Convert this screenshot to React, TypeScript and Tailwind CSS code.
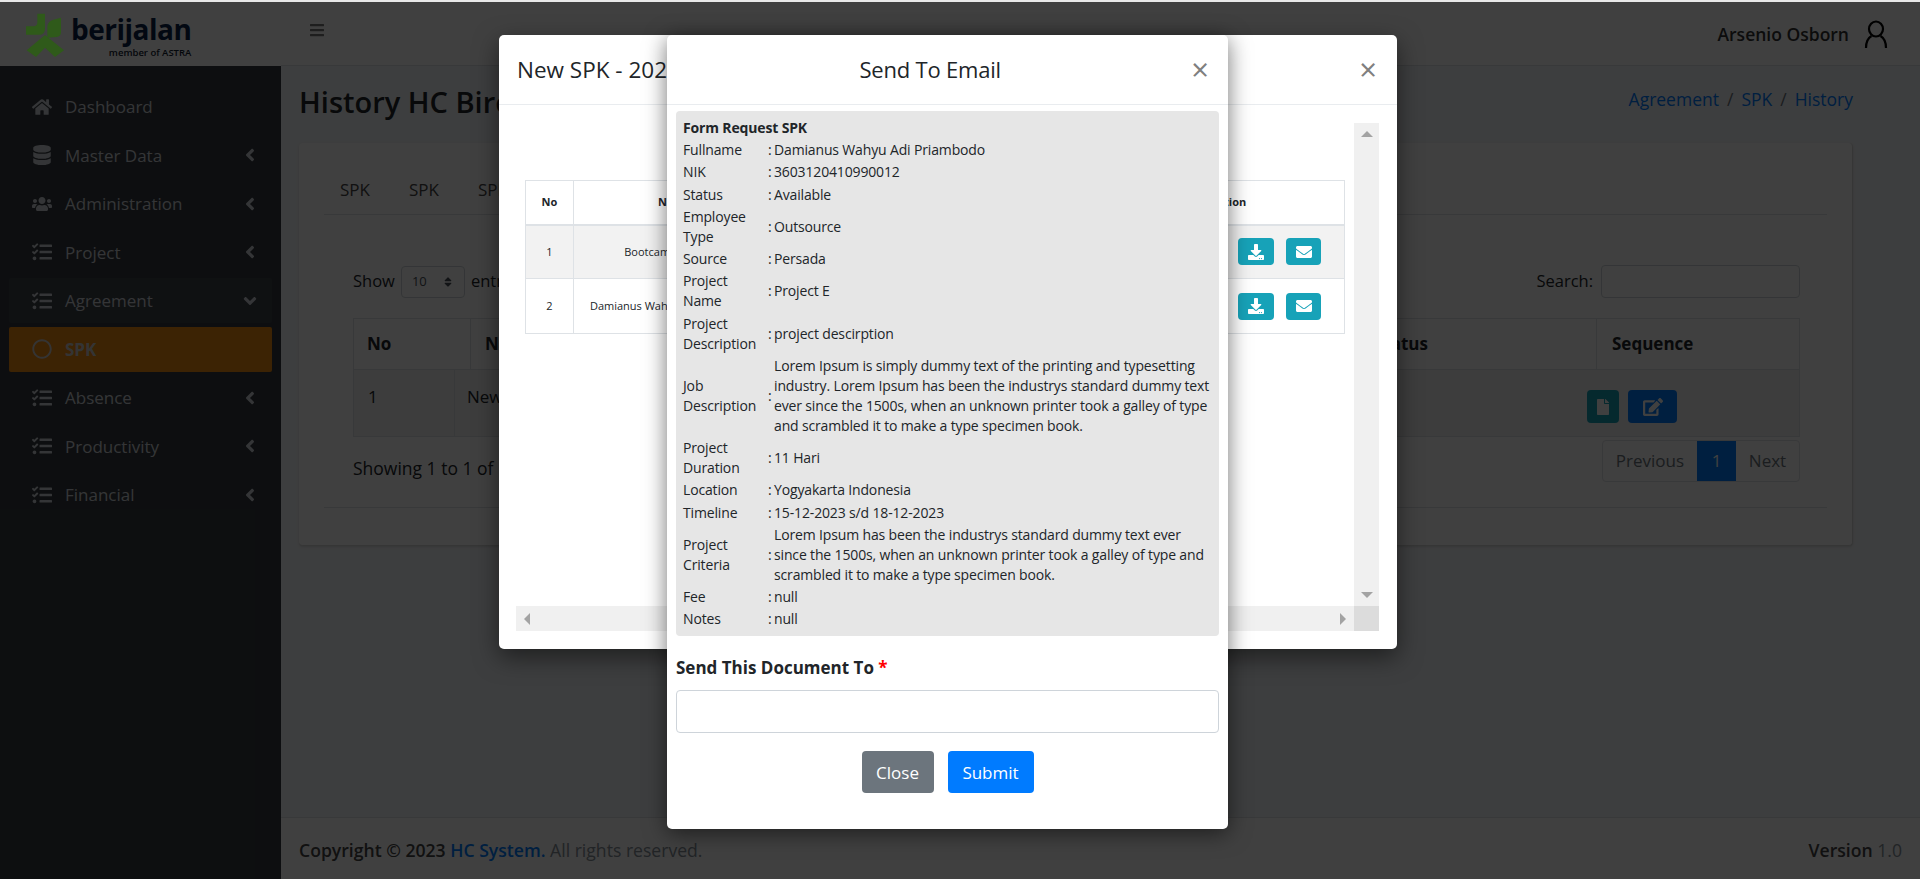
import React from 'react';
import {
  FaAngleDown,
  FaAngleLeft,
  FaBars,
  FaDatabase,
  FaDownload,
  FaEdit,
  FaEnvelope,
  FaFile,
  FaHome,
  FaRegCircle,
  FaSort,
  FaTasks,
  FaUsers,
} from 'react-icons/fa';

const menu = [
  { name: 'Dashboard', icon: FaHome },
  { name: 'Master Data', icon: FaDatabase, arrow: true },
  { name: 'Administration', icon: FaUsers, arrow: true },
  { name: 'Project', icon: FaTasks, arrow: true },
  { name: 'Agreement', icon: FaTasks, open: true },
  { name: 'SPK', icon: FaRegCircle, active: true },
  { name: 'Absence', icon: FaTasks, arrow: true },
  { name: 'Productivity', icon: FaTasks, arrow: true },
  { name: 'Financial', icon: FaTasks, arrow: true },
];

const details: { label: string; value: string }[] = [
  { label: 'Fullname', value: 'Damianus Wahyu Adi Priambodo' },
  { label: 'NIK', value: '3603120410990012' },
  { label: 'Status', value: 'Available' },
  { label: 'Employee Type', value: 'Outsource' },
  { label: 'Source', value: 'Persada' },
  { label: 'Project Name', value: 'Project E' },
  { label: 'Project Description', value: 'project descirption' },
  {
    label: 'Job Description',
    value:
      'Lorem Ipsum is simply dummy text of the printing and typesetting industry. Lorem Ipsum has been the industrys standard dummy text ever since the 1500s, when an unknown printer took a galley of type and scrambled it to make a type specimen book.',
  },
  { label: 'Project Duration', value: '11 Hari' },
  { label: 'Location', value: 'Yogyakarta Indonesia' },
  { label: 'Timeline', value: '15-12-2023 s/d 18-12-2023' },
  {
    label: 'Project Criteria',
    value:
      'Lorem Ipsum has been the industrys standard dummy text ever since the 1500s, when an unknown printer took a galley of type and scrambled it to make a type specimen book.',
  },
  { label: 'Fee', value: 'null' },
  { label: 'Notes', value: 'null' },
];

function Logo() {
  return (
    <div className="flex h-[64px] w-full items-start bg-white pl-[26px]">
      {/* the mark keeps its colour above the backdrop, as in the picture */}
      <svg width="38" height="44" viewBox="78 38 114 132" className="relative z-10 mt-[11px] shrink-0">
        <g fill="#2f5a1a">
          <path d="M112 40L135 40L135 85Q135 103 117 103L78 103L78 78L100 78Q112 78 112 66Z" />
          <path d="M183 52L183 95Q183 108 170 110L142 112L142 78Q144 62 160 58Z" />
          <path d="M135 104L192 150L165 170L135 142L108 170L80 150Z" />
        </g>
      </svg>
      <div className="ml-[7px] flex flex-col items-end pt-[12px]">
        <span className="text-[28px] leading-[30px] font-bold tracking-[-0.5px] text-[#0a2348]">berijalan</span>
        <span className="mt-[3px] text-[9.5px] leading-[12px] font-semibold text-[#10202f]">member of ASTRA</span>
      </div>
    </div>
  );
}

function Sidebar() {
  return (
    <aside className="flex w-[281px] shrink-0 flex-col bg-[#343a40]">
      <Logo />
      <nav className="flex flex-col pt-[16.5px]">
        {menu.map((item) => (
          <div
            key={item.name}
            className={`mx-[9px] my-[1.75px] flex h-[45px] items-center rounded-[2px] pr-[12px] pl-[20px] text-[17px] ${
              item.active
                ? 'bg-[#f08a10] font-bold text-[#d0d0d0]'
                : item.open
                  ? 'bg-white/5 text-[#d0d4da]'
                  : 'text-[#d0d4da]'
            }`}
          >
            <span className="mr-[10px] flex w-[26px] shrink-0 items-center justify-center">
              <item.icon className="text-[20px]" />
            </span>
            <span className="flex-1">{item.name}</span>
            {item.arrow && <FaAngleLeft className="text-[20px]" />}
            {item.open && <FaAngleDown className="text-[20px]" />}
          </div>
        ))}
      </nav>
    </aside>
  );
}

function Page() {
  return (
    <div className="flex min-w-0 flex-1 flex-col bg-[#f4f6f9]">
      <header className="flex h-[64px] shrink-0 items-center justify-between border-b border-[#dee2e6] bg-white pr-[32px] pl-[28px]">
        <FaBars className="mb-[7px] text-[16px] text-[#777]" />
        <div className="flex items-center gap-[15px] pt-[2px]">
          <span className="text-[17.5px] font-semibold text-[#333]">Arsenio Osborn</span>
          <svg width="24" height="30" viewBox="0 0 24 30" fill="none" stroke="#000" strokeWidth="2.2" className="mt-[1px]">
            <ellipse cx="12" cy="9" rx="7" ry="7.5" />
            <path d="M2 28c0-6 2-10 5.5-12M22 28c0-6-2-10-5.5-12" />
          </svg>
        </div>
      </header>
      <div className="flex items-start justify-between pt-[17px] pr-[67px] pl-[18px]">
        <h1 className="text-[29px] leading-[38px] font-semibold text-[#212529]">History HC Birojasa</h1>
        <div className="flex gap-[8px] text-[17.5px] leading-[33px] text-[#6c757d]">
          <span className="text-[#007bff]">Agreement</span>/<span className="text-[#007bff]">SPK</span>/
          <span className="text-[#007bff]">History</span>
        </div>
      </div>
      <section className="mt-[22px] mr-[67px] ml-[18px] h-[403px] rounded-[4px] border-r border-b border-[#d8d8d8] bg-white px-[25px] shadow-sm">
        <div className="flex h-[72px] items-end gap-[39px] border-b border-[#dee2e6] pb-[12px] pl-[16px] text-[17px] text-[#444]">
          <span>SPK</span>
          <span>SPK</span>
          <span>SPK</span>
        </div>
        <div className="mr-[27px] ml-[29px]">
          <div className="mt-[50px] flex items-center justify-between text-[16.5px] text-[#212529]">
            <div className="flex items-center gap-[6px]">
              Show
              <span className="flex h-[32px] w-[64px] items-center justify-between rounded-[4px] border border-[#ced4da] px-[10px] text-[13px] text-[#495057]">
                10
                <FaSort className="text-[12px]" />
              </span>
              entries
            </div>
            <div className="flex items-center gap-[8px]">
              Search:
              <span className="h-[33px] w-[199px] rounded-[4px] border border-[#ced4da] bg-white" />
            </div>
          </div>
          <div className="mt-[20px] flex h-[52px] items-center border border-[#dee2e6] text-[17px] font-bold text-[#212529]">
            <span className="flex h-full w-[117px] items-center border-r border-[#dee2e6] pl-[13px]">No</span>
            <span className="flex-1 pl-[14px]">Name</span>
            <span className="mr-[168px]">Status</span>
            <span className="flex h-full w-[203px] items-center border-l border-[#dee2e6] pl-[15px]">Sequence</span>
          </div>
          <div className="flex h-[67px] items-start border-x border-b border-[#dee2e6] bg-[#f2f2f2] text-[17px] text-[#212529]">
            <span className="flex h-full w-[101px] items-center border-r border-[#dee2e6] pb-[12px] pl-[14px]">1</span>
            <span className="flex h-full flex-1 items-center pb-[12px] pl-[12px]">New SPK</span>
            <div className="mt-[20px] mr-[122px] flex gap-[9px] text-[16px] text-white">
              <span className="flex h-[33px] w-[32px] items-center justify-center rounded-[4px] bg-[#17a2b8]">
                <FaFile />
              </span>
              <span className="flex h-[33px] w-[49px] items-center justify-center rounded-[4px] bg-[#007bff]">
                <FaEdit className="text-[20px]" />
              </span>
            </div>
          </div>
          <div className="mt-[3px] flex items-start justify-between text-[17px]">
            <span className="pt-[15px] text-[17.5px] text-[#212529]">Showing 1 to 1 of 1 entries</span>
            <div className="flex h-[42px] w-[198px] items-center rounded-[4px] border border-[#dee2e6] text-[#6c757d]">
              <span className="w-[94px] text-center">Previous</span>
              <span className="flex h-full w-[39px] items-center justify-center bg-[#007bff] text-white">1</span>
              <span className="flex-1 text-center">Next</span>
            </div>
          </div>
        </div>
        <div className="mt-[25px] border-t border-[#dee2e6]" />
      </section>
      <div className="flex-1" />
      <footer className="flex h-[62px] items-center justify-between border-t border-[#dee2e6] bg-white px-[18px] pt-[3px] text-[17.6px] text-[#869099]">
        <span>
          <b className="font-semibold text-[#444]">Copyright © 2023 </b>
          <b className="font-semibold text-[#007bff]">HC System.</b> All rights reserved.
        </span>
        <span>
          <b className="font-semibold text-[#444]">Version</b> 1.0
        </span>
      </footer>
    </div>
  );
}

function CloseX() {
  return <span className="text-[31px] leading-none font-normal text-[#7f7f7f]">×</span>;
}

function Triangle({ dir }: { dir: 'up' | 'down' | 'left' | 'right' }) {
  const points = {
    up: '0,8 6,2 12,8',
    down: '0,4 6,10 12,4',
    left: '8,0 2,6 8,12',
    right: '4,0 10,6 4,12',
  }[dir];
  return (
    <svg width="12" height="12" viewBox="0 0 12 12">
      <polygon points={points} fill="#a3a3a3" />
    </svg>
  );
}

function ActionButtons() {
  return (
    <div className="flex justify-end gap-[12px] pr-[23px] text-[16px] text-white">
      <span className="flex h-[27px] w-[36px] items-center justify-center rounded-[4px] bg-[#17a2b8]">
        <FaDownload />
      </span>
      <span className="flex h-[27px] w-[35px] items-center justify-center rounded-[4px] bg-[#17a2b8]">
        <FaEnvelope />
      </span>
    </div>
  );
}

function SpkModal() {
  const cell = 'border border-[#dee2e6] text-center align-middle';
  return (
    <div className="absolute inset-0 flex items-start justify-center pt-[33px] pr-[24px]">
      <div className="flex h-[614px] w-[898px] flex-col rounded-[5px] bg-white shadow-[0_8px_24px_rgba(0,0,0,0.5)]">
        <div className="flex h-[70px] shrink-0 items-center justify-between border-b border-[#e9ecef] pr-[20px] pl-[18px]">
          <span className="text-[22.5px] text-[#212529]">New SPK - 2023</span>
          <CloseX />
        </div>
        <div className="grid min-h-0 flex-1 grid-cols-[1fr_25px] grid-rows-[1fr_25px] pt-[18px] pr-[18px] pb-[18px] pl-[17px]">
          <div className="min-h-0 overflow-hidden pt-[57px] pl-[9px]">
            <table className="w-[820px] table-fixed border-collapse text-[11px] text-[#212529]">
              <colgroup>
                <col className="w-[48px]" />
                <col className="w-[202px]" />
                <col />
                <col className="w-[232px]" />
              </colgroup>
              <thead>
                <tr className="h-[44px] border-b-2 border-[#dee2e6] font-bold">
                  <th className={cell}>No</th>
                  <th className={cell}>Name</th>
                  <th className={cell} />
                  <th className={cell}>Action</th>
                </tr>
              </thead>
              <tbody>
                <tr className="h-[54px] bg-[#f2f2f2]">
                  <td className={cell}>1</td>
                  <td className={cell}>Bootcamp Berijalan</td>
                  <td className={cell} />
                  <td className={cell}>
                    <ActionButtons />
                  </td>
                </tr>
                <tr className="h-[55px]">
                  <td className={cell}>2</td>
                  <td className={cell}>Damianus Wahyu Adi Priambodo</td>
                  <td className={cell} />
                  <td className={cell}>
                    <ActionButtons />
                  </td>
                </tr>
              </tbody>
            </table>
          </div>
          <div className="flex flex-col items-center justify-between bg-[#f0f0f0] py-[6px]">
            <Triangle dir="up" />
            <Triangle dir="down" />
          </div>
          <div className="flex items-center justify-between bg-[#f0f0f0] px-[6px]">
            <Triangle dir="left" />
            <Triangle dir="right" />
          </div>
          <div className="bg-[#dcdcdc]" />
        </div>
      </div>
    </div>
  );
}

function EmailModal() {
  return (
    <div className="absolute inset-0 flex items-start justify-center pt-[33px] pr-[25px]">
      <div className="flex h-[794px] w-[561px] flex-col rounded-[5px] bg-white shadow-[0_4px_22px_rgba(0,0,0,0.55)]">
        <div className="flex h-[70px] shrink-0 items-center border-b border-[#e9ecef] pr-[19px] pl-[18px]">
          <span className="flex-1 pr-[16px] text-center text-[22px] tracking-[-0.2px] text-[#212529]">Send To Email</span>
          <CloseX />
        </div>
        <div className="px-[9px] pt-[6px]">
          <div className="rounded-[4px] bg-[#e6e6e6] pt-[7px] pr-[6px] pb-[7px] pl-[7px] text-[14px] leading-[20px] tracking-[-0.15px] text-[#212529]">
            <div className="mb-[2px] font-bold">Form Request SPK</div>
            <div className="grid grid-cols-[85px_6px_1fr] items-center gap-y-[2.25px]">
              {details.map((row) => (
                <React.Fragment key={row.label}>
                  <span>{row.label}</span>
                  <span>:</span>
                  <span>{row.value}</span>
                </React.Fragment>
              ))}
            </div>
          </div>
          <label className="mt-[20px] block text-[17px] leading-[24px] font-bold text-[#212529]">
            Send This Document To <span className="text-[#ff0000]">*</span>
          </label>
          <div className="mt-[10px] h-[43px] rounded-[4px] border border-[#ced4da] bg-white" />
          <div className="mt-[18px] flex justify-center gap-[14px] text-[17px] text-white">
            <span className="flex h-[42px] w-[72px] items-center justify-center rounded-[4px] bg-[#6c757d]">Close</span>
            <span className="flex h-[42px] w-[86px] items-center justify-center rounded-[4px] bg-[#007bff]">Submit</span>
          </div>
        </div>
      </div>
    </div>
  );
}

export default function App() {
  return (
    <div className="flex h-[879px] w-full flex-col overflow-hidden bg-[#e8e8e8] pt-[2px] font-['Open_Sans',sans-serif]">
      <div className="relative flex min-h-0 flex-1">
        <Sidebar />
        <Page />
        <div className="absolute inset-0 bg-black/75" />
        <SpkModal />
        <EmailModal />
      </div>
    </div>
  );
}
